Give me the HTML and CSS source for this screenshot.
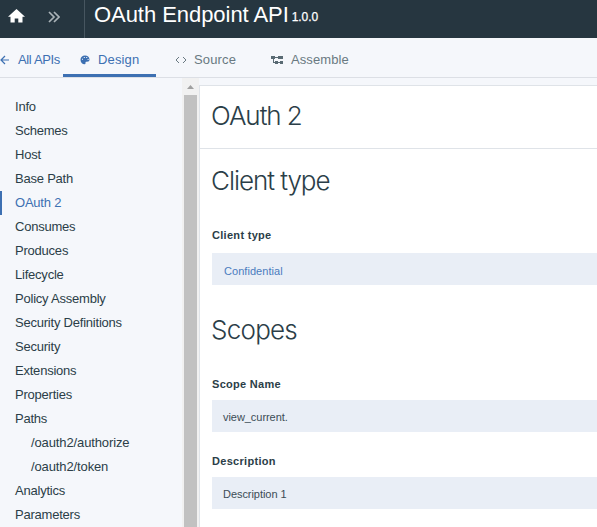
FILE: index.html
```html
<!DOCTYPE html>
<html lang="en">
<head>
<meta charset="utf-8">
<title>OAuth Endpoint API</title>
<link rel="stylesheet" href="styles.css">
</head>
<body>
<header class="topbar">
  <div class="topbar-nav">
    <svg class="home" viewBox="0 0 17 15" width="17" height="15"><path d="M8.5 0 17 7.7H14.5V13.5H10.3V9.5H6.7V13.5H2.5V7.7H0Z"/></svg>
    <svg class="chevrons" viewBox="0 0 12 12" width="12" height="12"><path d="M1 1 6 6 1 11M6 1 11 6 6 11"/></svg>
  </div>
  <h1 class="title">OAuth Endpoint API</h1><span class="version">1.0.0</span>
</header>
<nav class="tabs">
  <a class="back"><svg viewBox="0 0 10 10" width="10" height="10"><path d="M9 5H1.5M5 1 1 5 5 9"/></svg><span>All APIs</span></a>
  <a class="tab tab-design"><svg viewBox="0 0 10 10" width="10" height="10"><path d="M5 .5C2.3.5.5 2.3.5 4.8S2.2 9.3 4.7 9.3C6 9.3 5.2 7.6 5.7 7 6.4 6.2 9.5 7.5 9.5 4.5 9.5 2 7.4.5 5 .5Z"/><path class="holes" d="M2 3.7h1v1H2zM3.8 2h1v1h-1zM6.2 2h1v1h-1zM7.6 4h1v1h-1z"/></svg><span>Design</span></a>
  <a class="tab tab-source"><svg viewBox="0 0 12 8" width="12" height="8"><path d="M4 1 1 4 4 7M8 1 11 4 8 7"/></svg><span>Source</span></a>
  <a class="tab tab-assemble"><svg viewBox="0 0 12 8" width="12" height="8"><path d="M0 0h4v3H0zM7 0h5v3H7zM4 5h3v3H4zM9 5h3v3H9z"/><path d="M4 1h3v1H4zM7 6h2v1H7zM2 3h1v3H2zM2 6h2v1H2z"/></svg><span>Assemble</span></a>
</nav>
<div class="workspace">
  <ul class="sidebar">
    <li>Info</li>
    <li>Schemes</li>
    <li>Host</li>
    <li>Base Path</li>
    <li class="active">OAuth 2</li>
    <li>Consumes</li>
    <li>Produces</li>
    <li>Lifecycle</li>
    <li>Policy Assembly</li>
    <li>Security Definitions</li>
    <li>Security</li>
    <li>Extensions</li>
    <li>Properties</li>
    <li>Paths</li>
    <li class="nested">/oauth2/authorize</li>
    <li class="nested">/oauth2/token</li>
    <li>Analytics</li>
    <li>Parameters</li>
  </ul>
  <div class="scrollbar"><svg viewBox="0 0 7 4" width="7" height="4"><path d="M3.5 0 7 4H0Z"/></svg><div class="thumb"></div></div>
  <main class="panel">
    <h2 class="panel-title">OAuth 2</h2>
    <h2 class="section">Client type</h2>
    <h3 class="label">Client type</h3>
    <div class="field choice">Confidential</div>
    <h2 class="section section-scopes">Scopes</h2>
    <h3 class="label label-compact">Scope Name</h3>
    <div class="field">view_current.</div>
    <h3 class="label label-compact label-description">Description</h3>
    <div class="field">Description 1</div>
  </main>
</div>
</body>
</html>
```
FILE: styles.css
```css
* { box-sizing: border-box; }
body {
  margin: 0;
  height: 527px;
  overflow: hidden;
  display: flex;
  flex-direction: column;
  background: #f5f7fb;
  color: #2b3e48;
  font: 13px/24px "Liberation Sans", Arial, sans-serif;
}
h1, h2, h3, ul { margin: 0; padding: 0; }
svg { display: block; flex: none; }
.topbar { display: flex; height: 38px; flex: none; background: #263640; color: #fff; }
.topbar-nav { display: flex; width: 85px; border-right: 1px solid #475660; padding: 9px 0 0 8px; }
.home { fill: #fff; }
.chevrons { margin: 2px 0 0 23px; fill: none; stroke: #aab3b8; stroke-width: 1.7; }
.title { font-size: 22px; line-height: 29px; font-weight: 400; letter-spacing: -.05px; margin-left: 9px; white-space: nowrap; }
.version { font-size: 12px; line-height: 34px; margin-left: 3px; letter-spacing: -.1px; -webkit-text-stroke: .25px #fff; }
.tabs { display: flex; height: 40px; flex: none; border-bottom: 1px solid #dcdfe5; color: #697981; line-height: 43px; }
.tabs a { display: flex; white-space: nowrap; }
.tabs svg { margin-top: 17px; }
.tabs .back { width: 63px; color: #3d70b2; }
.back svg { fill: none; stroke: #3d70b2; stroke-width: 1.2; }
.back span { margin-left: 8px; letter-spacing: -.35px; }
.tab-design { width: 93px; height: 39px; padding-left: 17px; border-bottom: 3px solid #3d70b2; color: #3d70b2; }
.tab-design svg { fill: #3d70b2; }
.tab-design .holes { fill: #f5f7fb; }
.tab-design span { margin-left: 8px; letter-spacing: .15px; }
.tab-source { width: 115px; padding-left: 19px; }
.tabs .tab-source svg, .tabs .tab-assemble svg { margin-top: 18px; }
.tab-source svg { fill: none; stroke: #697981; }
.tab-source span { margin-left: 7px; letter-spacing: .15px; }
.tab-assemble svg { fill: #596a73; }
.tab-assemble span { margin-left: 8px; letter-spacing: .1px; }
.workspace { display: flex; flex: 1; min-height: 0; }
.sidebar { width: 182px; padding-top: 17px; list-style: none; letter-spacing: -.22px; }
.sidebar li { height: 24px; padding-left: 15px; }
.sidebar .active { border-left: 2px solid #3d70b2; padding-left: 13px; color: #3d70b2; }
.sidebar .nested { padding-left: 31px; letter-spacing: -.12px; }
.scrollbar { width: 17px; background: #f1f1f1; padding: 7px 2px 0; display: flex; flex-direction: column; }
.scrollbar svg { margin: 0 0 6px 3px; fill: #a0a0a0; }
.thumb { flex: 1; background: #c1c1c1; }
.panel { flex: 1; min-width: 0; margin-top: 7px; border: solid #dfe3e8; border-width: 1px 0 0 1px; background: #fff; }
.panel-title, .section { font: 300 26px/32px Inter, "Liberation Sans", sans-serif; padding-left: 11px; letter-spacing: -1.05px; }
.panel-title { height: 63px; padding-top: 14px; border-bottom: 1px solid #dfe3e8; }
.section { margin-top: 16px; }
.section-scopes { margin-top: 29px; letter-spacing: -.75px; }
.label { margin: 26px 0 0 12px; font-size: 11px; line-height: 24px; height: 30px; letter-spacing: .3px; }
.label-compact { height: 28px; }
.label-description { margin-top: 17px; }
.field { height: 32px; margin-left: 12px; padding-left: 11px; background: #e9eef6; color: #3b4c55; font-size: 11px; line-height: 35px; letter-spacing: -.05px; }
.choice { padding-left: 12px; color: #4b7cbe; line-height: 37px; letter-spacing: .05px; }
```
